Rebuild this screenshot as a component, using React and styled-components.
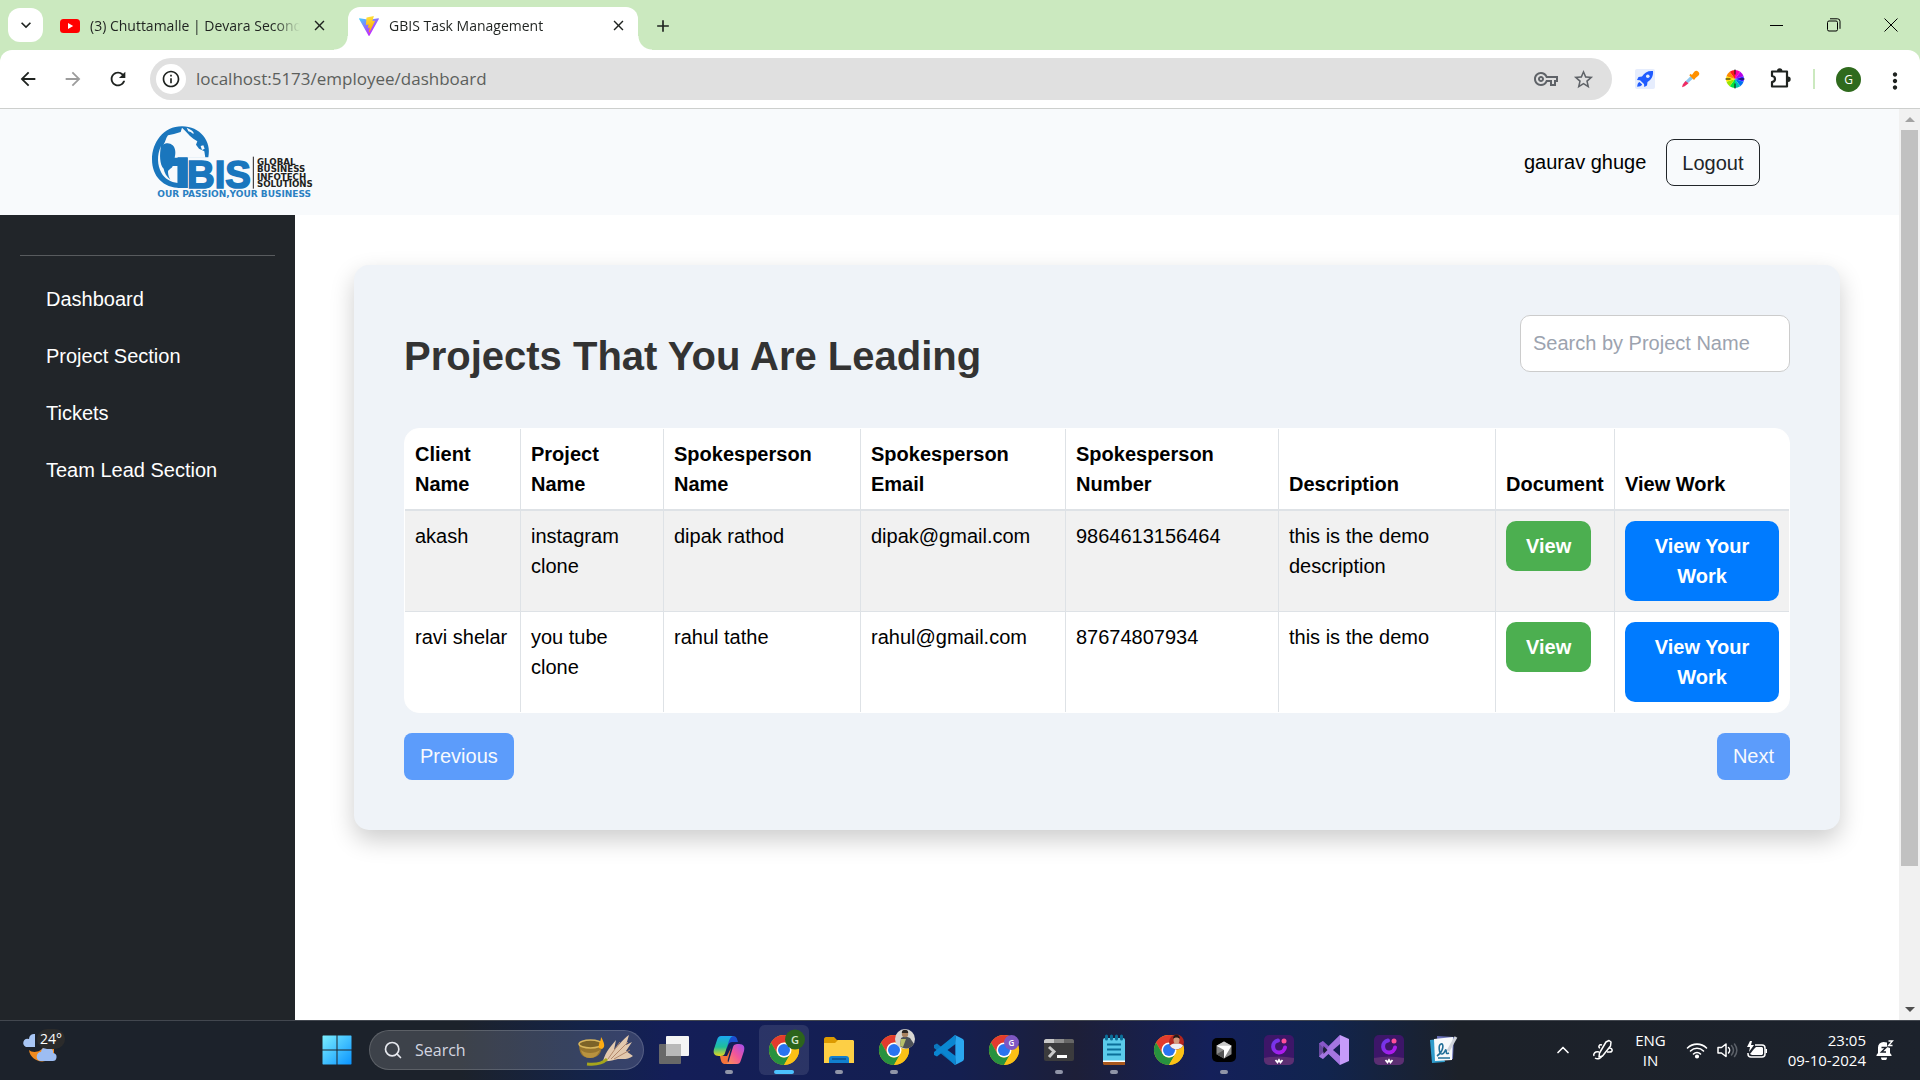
import React from 'react';
import styled, { createGlobalStyle } from 'styled-components';
import {
  MdArrowBack, MdArrowForward, MdRefresh, MdClose, MdAdd, MdInfoOutline, MdOutlineVpnKey,
  MdStarBorder, MdMoreVert, MdExpandMore,
} from 'react-icons/md';
import { ChevronUp, Search } from 'lucide-react';

const pageFont = '"Liberation Sans", Arial, sans-serif';
const systemFont = '"Open Sans", "Segoe UI", sans-serif';

const GlobalStyle = createGlobalStyle`
  *, *::before, *::after { box-sizing: border-box; }
  body { margin: 0; font-family: ${pageFont}; font-size: 20px; line-height: 30px; color: #000; background: #fff; }
  button, input { font: inherit; color: inherit; margin: 0; }
  button { cursor: pointer; padding: 0; border: 0; background: none; }
  a { color: inherit; text-decoration: none; }
  svg { display: block; flex: none; }
`;

const Screen = styled.div`
  display: flex;
  flex-direction: column;
  height: 100vh;
  overflow: hidden;
`;

/* ---------- browser chrome ---------- */

const TabStrip = styled.div`
  display: flex;
  align-items: flex-end;
  height: 50px;
  padding-left: 8px;
  background: #cbe9bf;
  font-family: ${systemFont};
  font-size: 14px;
  line-height: 20px;
  color: #1f2320;
`;

const TabMenu = styled.button`
  display: grid;
  place-items: center;
  width: 35px;
  height: 34px;
  margin-bottom: 8px;
  border-radius: 12px;
  background: #fff;
`;

const Tab = styled.div`
  position: relative;
  display: flex;
  align-items: center;
  gap: 10px;
  width: 290px;
  height: 43px;
  padding: 0 11px 6px;
  margin-left: ${(p) => (p.$active ? 0 : 6)}px;
  margin-right: ${(p) => (p.$active ? 0 : 9)}px;
  border-radius: 12px 12px 0 0;
  background: ${(p) => (p.$active ? '#fff' : 'transparent')};

  &::before, &::after {
    content: '';
    display: ${(p) => (p.$active ? 'block' : 'none')};
    position: absolute;
    bottom: 0;
    width: 14px;
    height: 14px;
  }
  &::before { left: -14px; background: radial-gradient(circle at 0 0, transparent 13px, #fff 14px); }
  &::after { right: -14px; background: radial-gradient(circle at 100% 0, transparent 13px, #fff 14px); }
`;

const TabTitle = styled.span`
  flex: 1;
  overflow: hidden;
  white-space: nowrap;
  mask-image: linear-gradient(to right, #000 88%, transparent);
`;

const IconButton = styled.button`
  display: grid;
  place-items: center;
  width: ${(p) => p.$size || 18}px;
  height: ${(p) => p.$size || 18}px;
  color: ${(p) => p.$color || '#1f2320'};
`;

const NewTab = styled(IconButton)`
  margin: 0 0 16px 15px;
`;

const WindowControls = styled.div`
  display: flex;
  align-self: center;
  margin-left: auto;
  padding-right: 1px;
`;

const WindowButton = styled.button`
  display: grid;
  place-items: center;
  width: 57px;
  height: 48px;
`;

const Toolbar = styled.div`
  background: #cbe9bf;
`;

const ToolbarInner = styled.div`
  display: flex;
  align-items: center;
  height: 59px;
  padding: 0 16px 0 15px;
  border-bottom: 1px solid #cdcfcd;
  border-radius: 12px 12px 0 0;
  background: #fff;
`;

const NavButtons = styled.div`
  display: flex;
  gap: 19px;
  margin-right: 19px;
`;

const AddressBar = styled.div`
  display: flex;
  align-items: center;
  flex: 1;
  height: 42px;
  padding: 0 14px 0 6px;
  border-radius: 21px;
  background: #e0e0e0;
  gap: 10px;
`;

const SiteInfo = styled.button`
  display: grid;
  place-items: center;
  width: 30px;
  height: 30px;
  border-radius: 50%;
  background: #fff;
`;

const Address = styled.label`
  flex: 1;
  display: flex;
  font-family: ${systemFont};
  font-size: 17px;
  line-height: 24px;
`;

const AddressInput = styled.input`
  flex: 1;
  padding: 0;
  border: 0;
  outline: 0;
  background: transparent;
  color: #5c5f5c;
`;

const Extensions = styled.div`
  display: flex;
  align-items: center;
  gap: 21px;
  margin-left: 21px;
`;

const Divider = styled.span`
  width: 2px;
  height: 20px;
  background: #cbe9bf;
`;

const Avatar = styled.button`
  width: 25px;
  height: 25px;
  border-radius: 50%;
  background: #2f6a1d;
  color: #fff;
  font-family: ${systemFont};
  font-size: 12px;
  line-height: 25px;
`;

/* ---------- page ---------- */

const Viewport = styled.div`
  display: flex;
  flex: 1;
  min-height: 0;
`;

const Page = styled.div`
  display: flex;
  flex-direction: column;
  flex: 1;
  min-width: 0;
`;

const Scrollbar = styled.div`
  display: flex;
  flex-direction: column;
  align-items: center;
  width: 21px;
  background: #f1f1f1;
`;

const ScrollArrow = styled.span`
  display: grid;
  place-items: center;
  height: 21px;
`;

const ScrollTrack = styled.div`
  flex: 1;
  width: 17px;
`;

const ScrollThumb = styled.div`
  height: 84.7%;
  background: #c1c1c1;
`;

const Navbar = styled.header`
  background: #f8fafc;
`;

const NavbarInner = styled.div`
  display: flex;
  align-items: center;
  justify-content: space-between;
  max-width: 1650px;
  height: 106px;
  margin: 0 auto;
  padding: 0 15px;
`;

const UserArea = styled.div`
  display: flex;
  align-items: center;
  gap: 20px;
`;

const OutlineButton = styled.button`
  padding: 8px 15px 7px;
  border: 1px solid #212529;
  border-radius: 8px;
  color: #212529;
`;

const Body = styled.div`
  display: flex;
  flex: 1;
  min-height: 0;
`;

const Sidebar = styled.nav`
  width: 295px;
  padding: 40px 20px;
  background: #212529;
  color: #fff;
`;

const SideRule = styled.hr`
  height: 1px;
  margin: 0 0 15px;
  border: 0;
  background: #585b5e;
`;

const SideList = styled.ul`
  margin: 0;
  padding: 0;
  list-style: none;
`;

const SideLink = styled.a`
  display: block;
  padding: 13px 26px 14px;
`;

const Main = styled.main`
  flex: 1;
  min-width: 0;
  padding: 50px 59px;
`;

const Card = styled.section`
  padding: 50px;
  border-radius: 15px;
  background: #eff3f8;
  box-shadow: 0 10px 25px rgba(0, 0, 0, 0.2);
`;

const CardHeader = styled.div`
  display: flex;
  justify-content: space-between;
  align-items: flex-start;
  margin-bottom: 48px;
`;

const Title = styled.h2`
  margin: 17px 0 0;
  font-size: 40px;
  line-height: 48px;
  font-weight: 700;
  color: #333;
`;

const SearchInput = styled.input`
  width: 270px;
  height: 57px;
  padding: 0 12px;
  border: 1px solid #ccc;
  border-radius: 10px;
  background: #fff;
  &::placeholder { color: #9ca3af; opacity: 1; }
`;

const TableFrame = styled.div`
  overflow: hidden;
  border: 1px solid #fff;
  border-radius: 15px;
  background: #fff;
`;

const Table = styled.table`
  width: 100%;
  table-layout: fixed;
  border-collapse: separate;
  border-spacing: 0;
`;

const Row = styled.tr`
  background: ${(p) => (p.$striped ? '#f1f1f1' : '#fff')};
  &:last-child td { border-bottom: 0; }
`;

const HeadCell = styled.th`
  padding: 10px;
  border-right: 1px solid #dee2e6;
  border-bottom: 2px solid #dee2e6;
  text-align: left;
  vertical-align: bottom;
  &:last-child { border-right: 0; }
`;

const Cell = styled.td`
  padding: 10px;
  border-right: 1px solid #dee2e6;
  border-bottom: 1px solid #dee2e6;
  vertical-align: top;
  &:last-child { border-right: 0; }
`;

const ActionButton = styled.button`
  display: block;
  width: ${(p) => (p.$wide ? '100%' : 'auto')};
  padding: 10px 20px;
  border-radius: 10px;
  background: ${(p) => (p.$wide ? '#007bff' : '#4caf50')};
  color: #fff;
  font-weight: 700;
`;

const Pager = styled.div`
  display: flex;
  justify-content: space-between;
  margin-top: 20px;
`;

const PageButton = styled.button`
  padding: 8px 16px 9px;
  border-radius: 8px;
  background: #5c9cfb;
  color: #f8fafd;
`;

/* ---------- taskbar ---------- */

const Taskbar = styled.footer`
  display: flex;
  align-items: center;
  height: 60px;
  padding: 0 26px 2px 20px;
  border-top: 1px solid #42474f;
  background: linear-gradient(90deg, #1c222b 0%, #1c222b 24%, #13234b 31%, #141e58 35%, #141f50 50%, #1d1f38 56%, #14205a 63%, #11244e 69%, #1c2129 76%, #1c222c 100%);
  color: #fff;
  font-family: ${systemFont};
  font-size: 15px;
  line-height: 20px;
`;

const Weather = styled.button`
  position: relative;
  width: 46px;
  height: 44px;
`;

const Temperature = styled.span`
  position: absolute;
  top: 1px;
  right: 1px;
  padding: 0 3px;
  border-radius: 10px;
  background: #2b2b2b;
  color: #fff;
  font-size: 14px;
`;

const Apps = styled.div`
  display: flex;
  align-items: center;
  gap: 5px;
  margin-left: 246px;
`;

const AppButton = styled.button`
  position: relative;
  display: grid;
  place-items: center;
  width: 50px;
  height: 50px;
  border-radius: 6px;
  background: ${(p) => (p.$current ? 'rgba(255, 255, 255, 0.1)' : 'transparent')};

  &::after {
    content: '';
    display: ${(p) => (p.$running ? 'block' : 'none')};
    position: absolute;
    left: 50%;
    bottom: 1px;
    width: ${(p) => (p.$current ? 20 : 8)}px;
    height: 4px;
    border-radius: 2px;
    transform: translateX(-50%);
    background: ${(p) => (p.$current ? '#4cc2ff' : '#9095a8')};
  }
`;

const TaskSearch = styled.label`
  display: flex;
  align-items: center;
  gap: 12px;
  width: 275px;
  height: 40px;
  margin-left: 2px;
  padding: 0 9px 0 13px;
  border: 1px solid rgba(255, 255, 255, 0.16);
  border-radius: 20px;
  background: rgba(255, 255, 255, 0.15);
`;

const TaskSearchInput = styled.input`
  flex: 1;
  min-width: 0;
  padding: 0;
  border: 0;
  outline: 0;
  background: transparent;
  font-size: 16px;
  &::placeholder { color: #d3d6e0; opacity: 1; }
`;

const Tray = styled.div`
  display: flex;
  align-items: center;
  margin-left: auto;
`;

const TrayGroup = styled.button`
  display: flex;
  align-items: center;
  gap: 8px;
  margin-right: ${(p) => p.$after}px;
`;

const TrayText = styled.button`
  margin-right: ${(p) => p.$after}px;
  text-align: ${(p) => p.$align || 'center'};
`;

const Line = styled.span`
  display: block;
`;

/* ---------- drawings ---------- */

const YoutubeIcon = () => (
  <svg width="20" height="20" viewBox="0 0 20 20"><rect y="3" width="20" height="14" rx="3.5" fill="#f00" /><path d="M8 7l5.200 3L8 13z" fill="#fff" /></svg>
);

const ViteIcon = () => (
  <svg width="20" height="20" viewBox="0 0 256 257">
    <defs>
      <linearGradient id="va" x1="0" y1="0" x2=".6" y2=".8"><stop stopColor="#41d1ff" /><stop offset="1" stopColor="#bd34fe" /></linearGradient>
      <linearGradient id="vb" x1=".4" y1="0" x2=".5" y2=".9"><stop stopColor="#ffea83" /><stop offset=".1" stopColor="#ffdd35" /><stop offset="1" stopColor="#ffa800" /></linearGradient>
    </defs>
    <path d="M255 38L134 253c-2 4-8 4-11 0L1 38c-3-5 1-11 7-10l120 21h2l118-21c6-1 10 5 7 10z" fill="url(#va)" />
    <path d="M185 0L97 18c-1 0-2 1-2 3l-6 91c0 2 2 4 4 3l25-5c2-1 4 1 4 3l-7 36c-1 2 1 4 4 4l15-5c2-1 5 1 4 4l-12 56c-1 4 4 5 6 2l2-2 72-143c1-3-1-5-4-5l-25 5c-2 0-4-2-4-4l17-57c0-2-2-5-5-4z" fill="url(#vb)" />
  </svg>
);

const RocketIcon = () => (
  <svg width="20" height="20" viewBox="0 0 20 20">
    <rect width="20" height="20" rx="2" fill="#e6edfd" />
    <path d="M18 2c-5-.5-8.500 1.500-11 5.500L3.500 8 2 11l3 .3L9 15l.3 3L12 16.500l.5-3.500C16.500 10.500 18.500 7 18 2z" fill="#1f5bff" />
    <path d="M4.500 13l2.700 2.600c-.8 1.700-2.700 2-5 2.200.2-2.300.6-4.200 2.300-4.800z" fill="#1f5bff" />
    <circle cx="12.800" cy="7.300" r="1.800" fill="#e6edfd" />
  </svg>
);

const DropperIcon = () => (
  <svg width="20" height="20" viewBox="0 0 20 20">
    <path d="M11.500 6.200l2.500 2.500-8.500 7.600-2-2z" fill="#8ec7ee" />
    <path d="M5.500 12l3 2.300-3.800 3-2.700 1 .8-2.700z" fill="#ef2b63" />
    <path d="M10 5.500l4.700 4.700M12.500 6.800l2.500-3.300a1.800 1.800 0 0 1 2.600 2.600l-3.200 2.600z" stroke="#ff9100" strokeWidth="2" fill="#ff9100" />
  </svg>
);

const wheel = ['#ff00aa', '#b400e6', '#3a1cff', '#0070f0', '#00c8b0', '#00e640', '#9be600', '#ffe000', '#ff8a00', '#ff1a1a'];
const ColorWheelIcon = () => (
  <svg width="20" height="20" viewBox="-10 -10 20 20">
    {wheel.map((color, i) => {
      const a = (i * Math.PI) / 5 - Math.PI / 2;
      const b = a + Math.PI / 5;
      return <path key={color} fill={color} d={`M0 0L${9 * Math.cos(a)} ${9 * Math.sin(a)}A9 9 0 0 1 ${9 * Math.cos(b)} ${9 * Math.sin(b)}z`} />;
    })}
    <path d="M-9.500 0h5M4.500 0h5M0-9.500v5M0 4.500v5" stroke="#111" strokeWidth="1" />
  </svg>
);

const PuzzleIcon = () => (
  <svg width="24" height="24" viewBox="0 0 24 24">
    <path d="M4 4.500h15v15H4v-4.500c4-.5 4-5.500 0-6z" fill="none" stroke="#1f2320" strokeWidth="2.200" strokeLinejoin="round" />
    <path d="M9 4a2.700 2.700 0 0 1 5.400 0zM20 9.500a2.700 2.700 0 0 1 0 5.400z" fill="#1f2320" />
  </svg>
);

const BrandLogo = () => (
  <svg width="177" height="72" viewBox="0 32 531 216" role="img" aria-label="GBIS">
    <path d="M205 126C216 78 180 33 126 33C70 33 36 82 36 132C36 184 70 218 122 218H143V126Z" fill="#1a76bd" />
    <path d="M84 60L102 56L122 50L126 37L136 47L150 62L160 70L172 78L168 88L177 100L193 108L196 127H104C108 112 106 98 98 90C90 82 78 82 70 88C77 80 76 70 84 60Z" fill="#f8fafc" />
    <path d="M140 37C152 42 165 50 160 56L152 50L145 48ZM182 92L190 90L194 100L186 104Z" fill="#f8fafc" />
    <path d="M63 92C50 120 52 150 64 172C74 190 92 200 113 203V152H98C96 160 84 162 84 170C84 180 88 188 91 193C80 184 73 172 71 160C59 148 58 118 63 92Z" fill="#f8fafc" />
    <path d="M96 150V142L114 126H143V218H113V150Z" fill="#1a76bd" />
    <text x="141" y="217" fontFamily="Liberation Sans, sans-serif" fontWeight="700" fontSize="115" fill="#1a76bd" stroke="#1a76bd" strokeWidth="5">BIS</text>
    <path d="M340 124V220" stroke="#231f20" strokeWidth="3" />
    <g fontFamily="DejaVu Sans, sans-serif" fontWeight="700" fontSize="26" fill="#231f20">
      <text x="351" y="149">GLOBAL</text>
      <text x="351" y="171">BUSINESS</text>
      <text x="351" y="193">INFOTECH</text>
      <text x="351" y="215">SOLUTIONS</text>
    </g>
    <text x="52" y="245" fontFamily="DejaVu Sans, sans-serif" fontWeight="700" fontSize="27" fill="#2b80c2">OUR PASSION,YOUR BUSINESS</text>
  </svg>
);

const WeatherIcon = () => (
  <svg width="46" height="44" viewBox="0 0 46 44">
    <path d="M6 19h9V6a5 5 0 0 0-6 5 4 4 0 0 0-3 8z" fill="#a8c6f5" />
    <path d="M9 22c3 3 12 3 15-4h10v8l-6 6c-8 4-18-1-19-10z" fill="#f08a1d" />
    <path d="M20 33h12a4 4 0 0 0 1-8 6 6 0 0 0-12-1 4.600 4.600 0 0 0-1 9z" fill="#9dbdf2" />
  </svg>
);

const StartIcon = () => (
  <svg width="30" height="30" viewBox="0 0 30 30">
    <defs><linearGradient id="win" x1="0" y1="0" x2="1" y2="1"><stop stopColor="#7beeff" /><stop offset="1" stopColor="#0a94ff" /></linearGradient></defs>
    <path d="M1 .5h13.500v14H.5V1zM15.500.5H29l.5.5v13.500h-14zM.5 15.500h14v14H1l-.5-.5zM15.500 15.500h14V29l-.5.5H15.500z" fill="url(#win)" />
  </svg>
);

const DiwaliIcon = () => (
  <svg width="56" height="32" viewBox="0 0 56 32">
    <path d="M1 10c0 9 3 14 11 14s12-5 12-14z" fill="#96752f" />
    <path d="M3 16c4 4 14 4 19 0-2 5-5 8-10 8s-8-3-9-8z" fill="#b8923f" />
    <ellipse cx="12.500" cy="10" rx="11.500" ry="4" fill="#7c6328" stroke="#d9b65c" strokeWidth="1.500" />
    <path d="M21 14c-1-5 2-6 2-11 3 5 5 10 1 12z" fill="#ffab12" />
    <path d="M25 27C28 17 33 12 38 6L36 16C42 10 45 5 51 1L48 11L54 8L48 17L55 22C50 26 45 25 40 25C35 26 30 28 25 27z" fill="#e3c9ae" />
    <path d="M30 25L42 8M33 25L50 8M36 25L52 16" stroke="#b3886b" strokeWidth="1" />
    <path d="M9 30c9 1 16-1 20-5" stroke="#a5a51c" strokeWidth="3" fill="none" />
  </svg>
);

const TaskViewIcon = () => (
  <svg width="32" height="32" viewBox="0 0 32 32">
    <rect x="1" y="10" width="22" height="20" rx="1" fill="#686868" />
    <rect x="8" y="2" width="23" height="20" rx="1" fill="#f4f4f4" />
    <path d="M8 10h15v12H9l-1-1z" fill="#b9b9b9" />
  </svg>
);

const CopilotIcon = () => (
  <svg width="32" height="32" viewBox="0 0 32 32">
    <defs>
      <linearGradient id="ca" x1="0" y1="0" x2="0" y2="1"><stop stopColor="#1ba7f2" /><stop offset=".55" stopColor="#1fbf9a" /><stop offset="1" stopColor="#e8d51c" /></linearGradient>
      <linearGradient id="cb" x1="1" y1="0" x2="0" y2="1"><stop stopColor="#a04df0" /><stop offset=".5" stopColor="#f2569a" /><stop offset="1" stopColor="#ff9a4c" /></linearGradient>
    </defs>
    <path d="M15 2h5c3 0 4 2 5 6h-6c-3 0-4 3-5 7z" fill="#1a4fd0" />
    <path d="M8 2h12c-3 1-4 4-5 8l-3 9c-1 3-3 3-6 3-5 0-6-3-5-7l3-9c1-3 2-4 4-4z" fill="url(#ca)" />
    <path d="M7 22h7l4-8-3 11c-1 3 1 5 2 5h-5c-3 0-4-2-5-8z" fill="#f4733b" />
    <path d="M24 30H13c3-1 3-4 4-7l3-10c1-3 3-3 6-3 5 0 6 3 5 7l-3 9c-1 3-2 4-4 4z" fill="url(#cb)" />
  </svg>
);

const ChromeIcon = ({ badge }) => (
  <svg width="36" height="36" viewBox="0 0 36 36" overflow="visible">
    <circle cx="18" cy="18" r="15" fill="#fbc116" />
    <path d="M5 10.500A15 15 0 0 1 31 10.500H18L11.500 21.800z" fill="#e33b2e" />
    <path d="M5 10.500L11.500 21.800A7.500 7.500 0 0 0 24.500 21.800L18 33A15 15 0 0 1 5 10.500z" fill="#27923f" />
    <path d="M18 10.500h13A15 15 0 0 1 18 33l6.500-11.200z" fill="#fbc116" />
    <circle cx="18" cy="18" r="7.500" fill="#fff" />
    <circle cx="18" cy="18" r="6" fill="#2a74f0" />
    {badge}
  </svg>
);

const GreenBadge = () => (
  <g><circle cx="29" cy="7.500" r="10" fill="#2c641c" /><text x="29" y="11.500" textAnchor="middle" fontFamily="Open Sans, sans-serif" fontWeight="600" fontSize="11" fill="#d8e8d2">G</text></g>
);
const PurpleBadge = () => (
  <g><circle cx="25.500" cy="10.500" r="7.500" fill="#7e57c2" /><text x="25.500" y="13.500" textAnchor="middle" fontFamily="Open Sans, sans-serif" fontWeight="600" fontSize="8" fill="#fff">G</text></g>
);
const PhotoBadge = () => (
  <g>
    <circle cx="29" cy="7" r="10" fill="#d8d6d2" />
    <path d="M24 14l1-8 4-2 5 2 4 6c-3 5-10 6-14 2z" fill="#4d5158" />
    <path d="M25 7l5 0-3 8-3-1z" fill="#b7c06a" />
    <circle cx="29" cy="2" r="3.200" fill="#a9825f" /><path d="M25.800 1a3.200 3.200 0 0 1 6.400 0z" fill="#2d2622" />
  </g>
);
const PortraitBadge = () => (
  <g>
    <circle cx="25.500" cy="10" r="7.500" fill="#b3261e" />
    <path d="M19 13.500c3-3 10-3 13 0a7.500 7.500 0 0 1-13 0z" fill="#eef0f4" />
    <ellipse cx="25.500" cy="8" rx="3" ry="4" fill="#d19a7c" /><path d="M22 7c0-6 7-6 7 0-2-2-5-2-7 0z" fill="#231b19" />
  </g>
);

const FolderIcon = () => (
  <svg width="32" height="32" viewBox="0 0 32 32">
    <path d="M1 5c0-1 1-2 2-2h8l3 3h10v6H1z" fill="#dc9a00" />
    <path d="M1 9h11l3-3h15l1 1v22H1z" fill="#fdcf45" />
    <path d="M6 29v-4c0-2 1-3 3-3h14c2 0 3 1 3 3v4z" fill="#1180d0" />
    <path d="M9 25h14" stroke="#0b4f8c" strokeWidth="1.500" />
  </svg>
);

const VsCodeIcon = () => (
  <svg width="32" height="32" viewBox="0 0 32 32">
    <path d="M22 1L9 13.500 4 9.500 1 11v3l21 17 1-8z" fill="#0b76bd" />
    <path d="M22 31L9 18.500 4 22.500 1 21v-3L22 1l1 8z" fill="#0a86d1" />
    <path d="M22.500 10v12L14.500 16z" fill="#142057" />
    <path d="M22 1l7 3.500a3 3 0 0 1 2 2.500v18a3 3 0 0 1-2 2.500L22 31c.5-1 .5-2 .5-3V4c0-1 0-2-.5-3z" fill="#2aa7f0" />
  </svg>
);

const TerminalIcon = () => (
  <svg width="32" height="32" viewBox="0 0 32 32">
    <rect x="1" y="5" width="30" height="22" rx="2" fill="#3b3b3d" />
    <path d="M1 9V7c0-1 1-2 2-2h8v4z" fill="#c8c8c8" /><path d="M11 5h10v4H11z" fill="#8e8e8e" /><path d="M21 5h8c1 0 2 1 2 2v2H21z" fill="#666" />
    <path d="M6 13l5 4.500L6 23" stroke="#c9c9c9" strokeWidth="3" fill="none" /><path d="M14 22.500h10" stroke="#fff" strokeWidth="3" />
  </svg>
);

const NotepadIcon = () => (
  <svg width="32" height="32" viewBox="0 0 32 32">
    <rect x="5" y="4" width="22" height="26" rx="2" fill="#5bcbea" />
    <path d="M5 27h22v4H6l-1-1z" fill="#a8571c" /><path d="M5 26.500h22v1.500H5z" fill="#fff" />
    <path d="M9 10.500h14M9 15.500h14M9 20.500h14" stroke="#0b6f99" strokeWidth="2" />
    <path d="M8.500 2v3M13.500 2v3M18.500 2v3M23.500 2v3" stroke="#0b6f99" strokeWidth="3" strokeLinecap="round" />
  </svg>
);

const CubeIcon = () => (
  <svg width="32" height="32" viewBox="0 0 32 32">
    <rect x="4" y="4" width="24" height="24" rx="5" fill="#000" />
    <path d="M16 7.500l7.500 4.300v8.400L16 24.500l-7.500-4.300v-8.400z" fill="#8b8b8b" />
    <path d="M16 7.500l7.500 4.300L16 14l-7.500-2.200z" fill="#c9c9c9" />
    <path d="M8.500 11.800h15L16 24.500V16z" fill="#fff" /><path d="M8.500 20.200L16 16v8.500z" fill="#555" />
  </svg>
);

const RingIcon = () => (
  <svg width="32" height="32" viewBox="0 0 32 32">
    <defs><linearGradient id="rg" x1="0" y1="0" x2="1" y2="1"><stop stopColor="#6a3ae8" /><stop offset="1" stopColor="#b516ee" /></linearGradient></defs>
    <rect x="1" y="1" width="30" height="30" rx="5" fill="#3d1668" />
    <path d="M1 24c10-2 20-2 30 0v2a5 5 0 0 1-5 5H6a5 5 0 0 1-5-5z" fill="#5b2f72" />
    <path d="M15 6.500a6 6 0 1 0 7 7" stroke="url(#rg)" strokeWidth="4" fill="none" strokeLinecap="round" />
    <circle cx="21" cy="7" r="2.500" fill="#ff4f9a" />
    <path d="M12.500 26l2 2.500L16 26l1.500 2.500 2-2.500" stroke="#fff" strokeWidth="1.800" fill="none" />
  </svg>
);

const VisualStudioIcon = () => (
  <svg width="32" height="32" viewBox="0 0 32 32">
    <path d="M1 9.500L5 7v18l-4-2.500z" fill="#6a4aa0" />
    <path d="M5 7l5.500 5L22 1v30L1 9.500z" fill="#8857c9" />
    <path d="M5 25l5.500-5L22 31V1L1 22.500z" fill="#a476e0" />
    <path d="M5.500 12v8l4-4z" fill="#1d1f38" /><path d="M22 10v12l-7-6z" fill="#162052" />
    <path d="M22 1l9 4v22l-9 4z" fill="#c69bfa" />
  </svg>
);

const SignIcon = () => (
  <svg width="32" height="32" viewBox="0 0 32 32">
    <path d="M2 6l9-1 6 23-13 1z" fill="#2f9ccc" /><path d="M9 2l17 1-1 22-15 1z" fill="#6870b8" />
    <path d="M6 5l19-2-1 23-17 1z" fill="#f7f9fb" />
    <path d="M9 22c7-5 7-13 4-12s-2 10 1 10 3-5 4-4-1 5 3 3M10 24h12" stroke="#236f98" strokeWidth="1.600" fill="none" />
    <path d="M28 3L20 17" stroke="#cfd3da" strokeWidth="3" />
  </svg>
);

const PenIcon = () => (
  <svg width="22" height="22" viewBox="0 0 22 22" fill="none" stroke="#fff" strokeWidth="1.500" strokeLinejoin="round">
    <path d="M14 3l3-1.500 2 1.500-.5 4-8 10-3.500 1 .5-4z" /><path d="M17 9c4 0 4 4 1 4h-3M10 6c-3-1-4 2-2 3M7 13c-4-1-6 2-5 4M3 19c3 2 6 0 7-2" />
  </svg>
);

const WifiIcon = () => (
  <svg width="22" height="20" viewBox="0 0 22 20" fill="none" stroke="#fff" strokeWidth="1.600" strokeLinecap="round">
    <path d="M1.500 8a13.500 13.500 0 0 1 19 0M4.500 11a9.200 9.200 0 0 1 13 0M7.500 14a5 5 0 0 1 7 0" /><circle cx="11" cy="16.500" r="1.300" fill="#fff" />
  </svg>
);

const VolumeIcon = () => (
  <svg width="22" height="20" viewBox="0 0 22 20" fill="none" stroke="#fff" strokeWidth="1.500" strokeLinecap="round" strokeLinejoin="round">
    <path d="M2 7.500h3.500L10 4v12.500L5.500 13H2z" /><path d="M12.500 7.500c1.500 1.500 1.500 4 0 5.500" />
    <path d="M15.500 5.500c2.500 3 2.500 6.500 0 9.500M18.500 4c3 4 3 8.500 0 12.500" stroke="#5c6169" />
  </svg>
);

const BatteryIcon = () => (
  <svg width="22" height="20" viewBox="0 0 22 20">
    <path d="M9 5h7a3 3 0 0 1 3 3v6a3 3 0 0 1-3 3H5a3 3 0 0 1-3-3v-1" fill="none" stroke="#fff" strokeWidth="1.500" />
    <path d="M10 7h6l1 1v6l-1 1H6l-2-1 4-5z" fill="#fff" /><path d="M19.500 9H21v4h-1.500z" fill="#fff" />
    <path d="M4 1L1 7h3l-1 5 5-7H5l1-4z" fill="#fff" />
  </svg>
);

const BellIcon = () => (
  <svg width="18" height="20" viewBox="0 0 18 20">
    <path d="M7.500 2A5.500 5.500 0 0 0 2 7.500V13L.5 15v1h15v-1L14 13V8l-3-1V2.500z" fill="#fff" /><path d="M5 17.500h6a3 3 0 0 1-6 0z" fill="#fff" />
    <path d="M5.500 7.500h4.500l-4.500 4.500H10" stroke="#1c222c" strokeWidth="1.500" fill="none" /><path d="M12.500 1h4l-4 4.500h4" stroke="#fff" strokeWidth="1.300" fill="none" />
  </svg>
);

/* ---------- data ---------- */

const columns = [
  ['Client Name', 116], ['Project Name', 143], ['Spokesperson Name', 197], ['Spokesperson Email', 205],
  ['Spokesperson Number', 213], ['Description', 217], ['Document', 119], ['View Work', 174],
];

const projects = [
  ['akash', 'instagram clone', 'dipak rathod', 'dipak@gmail.com', '9864613156464', 'this is the demo description'],
  ['ravi shelar', 'you tube clone', 'rahul tathe', 'rahul@gmail.com', '87674807934', 'this is the demo'],
];

const links = ['Dashboard', 'Project Section', 'Tickets', 'Team Lead Section'];

const pinnedApps = [
  { name: 'Task View', icon: <TaskViewIcon /> },
  { name: 'Copilot', icon: <CopilotIcon />, running: true },
  { name: 'Chrome, profile G', icon: <ChromeIcon badge={<GreenBadge />} />, running: true, current: true },
  { name: 'File Explorer', icon: <FolderIcon />, running: true },
  { name: 'Chrome, personal', icon: <ChromeIcon badge={<PhotoBadge />} />, running: true },
  { name: 'Visual Studio Code', icon: <VsCodeIcon /> },
  { name: 'Chrome, second profile', icon: <ChromeIcon badge={<PurpleBadge />} /> },
  { name: 'Terminal', icon: <TerminalIcon />, running: true },
  { name: 'Notepad', icon: <NotepadIcon />, running: true },
  { name: 'Chrome, third profile', icon: <ChromeIcon badge={<PortraitBadge />} /> },
  { name: 'Cursor', icon: <CubeIcon />, running: true },
  { name: 'Recorder', icon: <RingIcon /> },
  { name: 'Visual Studio', icon: <VisualStudioIcon /> },
  { name: 'Recorder', icon: <RingIcon /> },
  { name: 'Signature', icon: <SignIcon /> },
];

function Browser() {
  return (
    <>
      <TabStrip>
        <TabMenu aria-label="Search tabs"><MdExpandMore size={20} /></TabMenu>
        <Tab>
          <YoutubeIcon />
          <TabTitle>(3) Chuttamalle | Devara Second</TabTitle>
          <IconButton aria-label="Close tab"><MdClose size={17} /></IconButton>
        </Tab>
        <Tab $active>
          <ViteIcon />
          <TabTitle>GBIS Task Management</TabTitle>
          <IconButton aria-label="Close tab"><MdClose size={17} /></IconButton>
        </Tab>
        <NewTab aria-label="New tab"><MdAdd size={20} /></NewTab>
        <WindowControls>
          <WindowButton aria-label="Minimize"><svg width="14" height="14"><path d="M0 7.500h13" stroke="#000" /></svg></WindowButton>
          <WindowButton aria-label="Restore"><svg width="14" height="14" fill="none" stroke="#000"><rect x=".5" y="3" width="10" height="10" rx="1.500" /><path d="M3 .8h7.500a2.500 2.500 0 0 1 2.500 2.500v7.500" /></svg></WindowButton>
          <WindowButton aria-label="Close"><svg width="14" height="14" stroke="#000"><path d="M.5.5l13 13M13.500.5l-13 13" /></svg></WindowButton>
        </WindowControls>
      </TabStrip>
      <Toolbar>
        <ToolbarInner>
          <NavButtons>
            <IconButton $size={26} aria-label="Back"><MdArrowBack size={22} /></IconButton>
            <IconButton $size={26} $color="#9c9c9c" aria-label="Forward"><MdArrowForward size={22} /></IconButton>
            <IconButton $size={26} aria-label="Reload"><MdRefresh size={22} /></IconButton>
          </NavButtons>
          <AddressBar>
            <SiteInfo aria-label="Site information"><MdInfoOutline size={20} color="#1f2320" /></SiteInfo>
            <Address><AddressInput aria-label="Address" defaultValue="localhost:5173/employee/dashboard" /></Address>
            <IconButton $size={24} $color="#5f6368" aria-label="Passwords"><MdOutlineVpnKey size={24} /></IconButton>
            <IconButton $size={30} $color="#5f6368" aria-label="Bookmark"><MdStarBorder size={23} /></IconButton>
          </AddressBar>
          <Extensions>
            <IconButton $size={24} aria-label="Rocket extension"><RocketIcon /></IconButton>
            <IconButton $size={24} aria-label="Color picker"><DropperIcon /></IconButton>
            <IconButton $size={24} aria-label="Color wheel"><ColorWheelIcon /></IconButton>
            <IconButton $size={24} aria-label="Extensions"><PuzzleIcon /></IconButton>
            <Divider />
            <Avatar aria-label="Profile">G</Avatar>
            <IconButton $size={22} aria-label="Menu"><MdMoreVert size={26} /></IconButton>
          </Extensions>
        </ToolbarInner>
      </Toolbar>
    </>
  );
}

function ProjectsCard() {
  return (
    <Card>
      <CardHeader>
        <Title>Projects That You Are Leading</Title>
        <SearchInput type="text" aria-label="Search by Project Name" placeholder="Search by Project Name" />
      </CardHeader>
      <TableFrame>
        <Table>
          <colgroup>{columns.map(([name, width]) => <col key={name} width={width} />)}</colgroup>
          <thead>
            <tr>{columns.map(([name]) => <HeadCell key={name} scope="col">{name}</HeadCell>)}</tr>
          </thead>
          <tbody>
            {projects.map((project, i) => (
              <Row key={project[0]} $striped={i % 2 === 0}>
                {project.map((value) => <Cell key={value}>{value}</Cell>)}
                <Cell><ActionButton>View</ActionButton></Cell>
                <Cell><ActionButton $wide>View Your Work</ActionButton></Cell>
              </Row>
            ))}
          </tbody>
        </Table>
      </TableFrame>
      <Pager>
        <PageButton disabled>Previous</PageButton>
        <PageButton disabled>Next</PageButton>
      </Pager>
    </Card>
  );
}

function SystemBar() {
  return (
    <Taskbar>
      <Weather aria-label="Weather"><WeatherIcon /><Temperature>24°</Temperature></Weather>
      <Apps>
        <AppButton aria-label="Start"><StartIcon /></AppButton>
        <TaskSearch>
          <Search size={20} color="#e6e8ee" />
          <TaskSearchInput aria-label="Search" placeholder="Search" />
          <DiwaliIcon />
        </TaskSearch>
        {pinnedApps.map((app, i) => (
          <AppButton key={i} aria-label={app.name} $running={app.running} $current={app.current}>{app.icon}</AppButton>
        ))}
      </Apps>
      <Tray>
        <TrayGroup $after={19} aria-label="Show hidden icons"><ChevronUp size={20} /></TrayGroup>
        <TrayGroup $after={21} aria-label="Pen menu"><PenIcon /></TrayGroup>
        <TrayText $after={20}><Line>ENG</Line><Line>IN</Line></TrayText>
        <TrayGroup $after={20} aria-label="Network, volume, battery"><WifiIcon /><VolumeIcon /><BatteryIcon /></TrayGroup>
        <TrayText $after={10} $align="right"><Line>23:05</Line><Line>09-10-2024</Line></TrayText>
        <TrayGroup $after={0} aria-label="Notifications"><BellIcon /></TrayGroup>
      </Tray>
    </Taskbar>
  );
}

export default function App() {
  return (
    <Screen>
      <GlobalStyle />
      <Browser />
      <Viewport>
        <Page>
          <Navbar>
            <NavbarInner>
              <BrandLogo />
              <UserArea>
                <span>gaurav ghuge</span>
                <OutlineButton>Logout</OutlineButton>
              </UserArea>
            </NavbarInner>
          </Navbar>
          <Body>
            <Sidebar>
              <SideRule />
              <SideList>
                {links.map((link) => <li key={link}><SideLink href="#">{link}</SideLink></li>)}
              </SideList>
            </Sidebar>
            <Main><ProjectsCard /></Main>
          </Body>
        </Page>
        <Scrollbar aria-hidden="true">
          <ScrollArrow><svg width="10" height="6"><path d="M5 0l5 5H0z" fill="#a3a3a3" /></svg></ScrollArrow>
          <ScrollTrack><ScrollThumb /></ScrollTrack>
          <ScrollArrow><svg width="10" height="6"><path d="M5 5L0 0h10z" fill="#505050" /></svg></ScrollArrow>
        </Scrollbar>
      </Viewport>
      <SystemBar />
    </Screen>
  );
}
